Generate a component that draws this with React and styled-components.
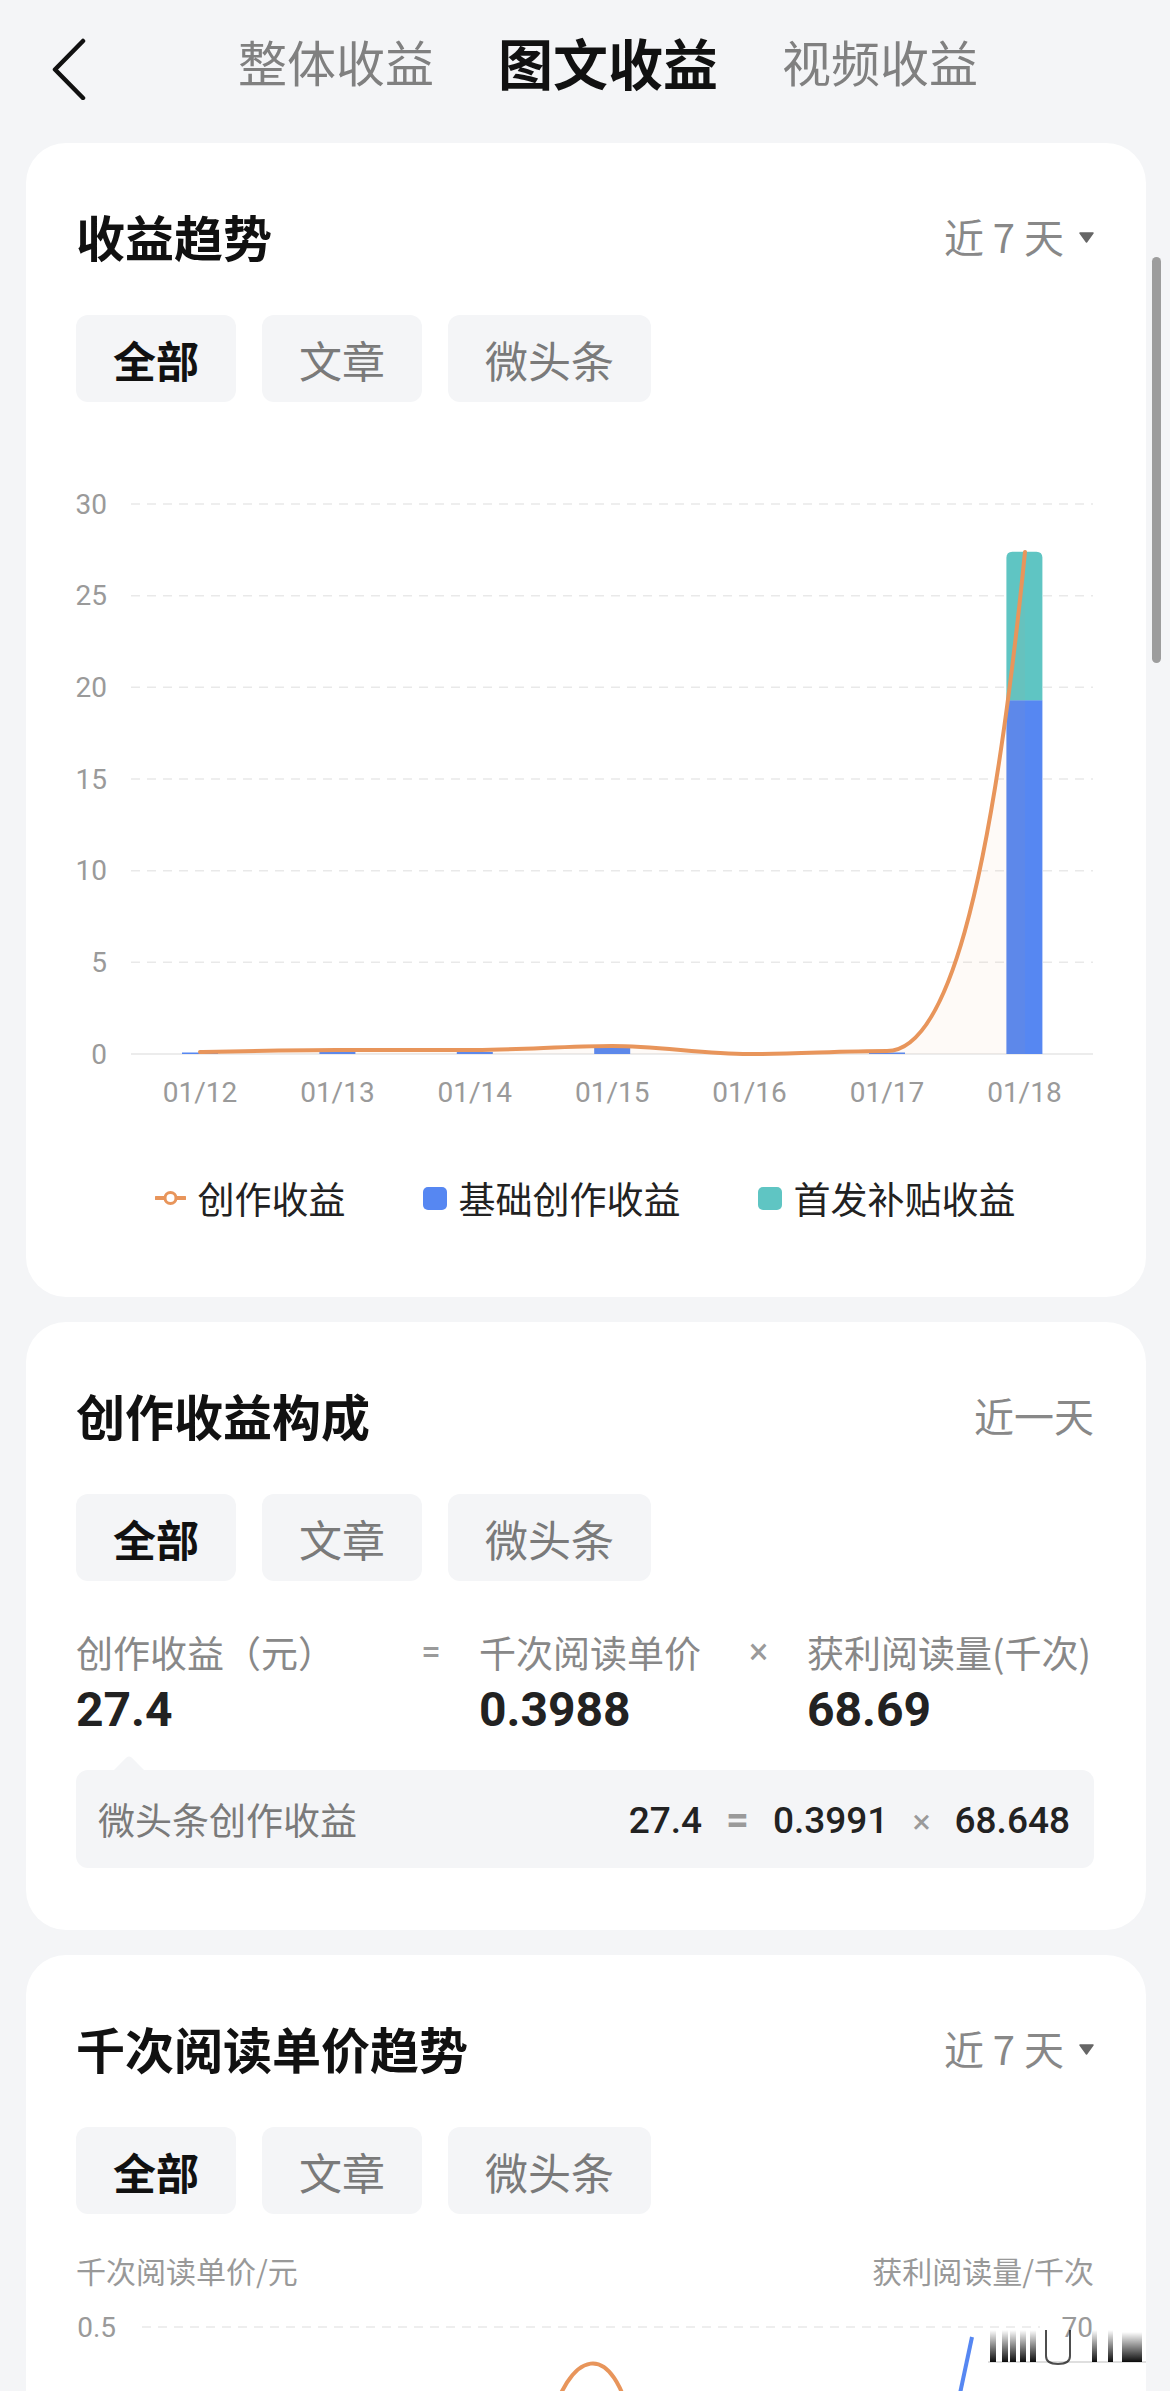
import React from 'react';
import styled, { createGlobalStyle } from 'styled-components';

const GlobalStyle = createGlobalStyle`
  html, body {
    margin: 0;
    padding: 0;
    background: #f4f5f7;
  }
  body {
    font-family: "Noto Sans CJK SC", "Noto Sans", sans-serif;
    color: #111;
  }
`;

const ORANGE = '#e8955b';
const BLUE = '#5687f2';
const TEAL = '#5fc5c3';

const Page = styled.div`
  position: relative;
  width: 1170px;
  min-height: 2391px;
  box-sizing: border-box;
  padding: 0 24px 40px 26px;
  overflow: hidden;
`;

const Header = styled.div`
  height: 122px;
  display: flex;
  align-items: center;
  padding-left: 22px;
`;

const Back = styled.svg`
  width: 40px;
  height: 70px;
  margin-top: 8px;
  flex-shrink: 0;
`;

const Tabs = styled.div`
  display: flex;
  align-items: center;
  gap: 64px;
  margin-left: 150px;
`;

const Tab = styled.span`
  font-size: ${p => (p.$active ? '55px' : '49px')};
  font-weight: ${p => (p.$active ? 700 : 400)};
  color: ${p => (p.$active ? '#111' : '#808080')};
  line-height: 70px;
`;

const Stack = styled.div`
  display: flex;
  flex-direction: column;
  gap: 25px;
  margin-top: 21px;
`;

const Card = styled.section`
  background: #fff;
  border-radius: 40px;
  padding: 63px 52px ${p => p.$pb || 60}px 50px;
`;

const CardHead = styled.div`
  display: flex;
  align-items: center;
  justify-content: space-between;
  height: 60px;
`;

const Title = styled.h2`
  margin: 0;
  font-size: 49px;
  font-weight: 700;
  line-height: 60px;
  color: #111;
`;

const Range = styled.div`
  display: flex;
  align-items: center;
  font-size: 40px;
  color: #888;
  white-space: pre;
`;

const Caret = styled.svg`
  width: 15px;
  height: 11px;
  margin-left: 15px;
  margin-top: 2px;
`;

const Chips = styled.div`
  display: flex;
  gap: 26px;
  margin-top: 49px;
`;

const Chip = styled.div`
  height: 87px;
  padding: 0 37px;
  display: flex;
  align-items: center;
  border-radius: 12px;
  background: #f4f5f7;
  font-size: 43px;
  font-weight: ${p => (p.$active ? 700 : 400)};
  color: ${p => (p.$active ? '#111' : '#7a7a7a')};
`;

const Chart = styled.svg`
  display: block;
  width: 1030px;
  height: ${p => p.$h}px;
  margin-left: -12px;
  font-family: Roboto, "Liberation Sans", sans-serif;
`;

const Legend = styled.div`
  display: flex;
  justify-content: center;
  gap: 77px;
  margin-top: 53px;
  font-size: 37px;
  line-height: 50px;
  color: #222;
`;

const LegendItem = styled.div`
  display: flex;
  align-items: center;
  gap: 12px;
`;

const Swatch = styled.span`
  width: 24px;
  height: 23px;
  border-radius: 5px;
  background: ${p => p.$color};
`;

const Formula = styled.div`
  display: grid;
  grid-template-columns: 345px 58px 270px 58px 1fr;
  margin-top: 47px;
`;

const TermLabel = styled.div`
  font-size: 37px;
  line-height: 48px;
  color: #888;
  white-space: nowrap;
`;

const TermValue = styled.div`
  margin-top: 6px;
  font-family: Roboto, "Liberation Sans", sans-serif;
  font-size: 48px;
  font-weight: 700;
  line-height: 56px;
  color: #222;
`;

const Op = styled.div`
  font-family: Roboto, "Liberation Sans", sans-serif;
  font-size: 36px;
  line-height: 48px;
  color: #9a9a9a;
`;

const SubBox = styled.div`
  position: relative;
  margin-top: 32px;
  height: 98px;
  padding: 0 24px 0 22px;
  display: flex;
  align-items: center;
  justify-content: space-between;
  background: #f4f5f7;
  border-radius: 12px;
  &::before {
    content: '';
    position: absolute;
    top: -10px;
    left: 41px;
    width: 24px;
    height: 24px;
    background: #f4f5f7;
    border-top-left-radius: 4px;
    transform: rotate(45deg);
  }
`;

const SubLabel = styled.span`
  font-size: 37px;
  color: #7a7a7a;
`;

const SubNums = styled.div`
  display: flex;
  align-items: baseline;
  gap: 24px;
  font-family: Roboto, "Liberation Sans", sans-serif;
  font-size: 37px;
  font-weight: 500;
  color: #222;
`;

const SubOp = styled.span`
  color: #9a9a9a;
  font-weight: ${p => (p.$bold ? 700 : 400)};
  font-size: ${p => (p.$bold ? '40px' : '34px')};
`;

const AxisRow = styled.div`
  display: flex;
  justify-content: space-between;
  margin-top: 36px;
  font-size: 30px;
  line-height: 40px;
  color: #999;
`;

const Scrollbar = styled.div`
  position: absolute;
  left: 1152px;
  top: 257px;
  width: 9px;
  height: 406px;
  border-radius: 5px;
  background: #9d9d9d;
`;

const Watermark = styled.svg`
  position: absolute;
  left: 988px;
  top: 2320px;
  width: 158px;
  height: 46px;
`;

const FILTERS = ['全部', '文章', '微头条'];
const DATES = ['01/12', '01/13', '01/14', '01/15', '01/16', '01/17', '01/18'];
const TICKS = [0, 5, 10, 15, 20, 25, 30];
const SMALL_BARS = [1.5, 2, 2, 6, 0, 1.5];
const ZERO = 652;
const UNIT = 550 / 30;
const colX = i => 122 + i * 137.4;

const LINE =
  'M122,650 C168,649 213,648 259,648 C305,648 351,648 397,648 C443,648 488,644 534,644 ' +
  'C580,644 625,652 671,652 C717,652 763,649 809,649 C867,649 912,498 947,150';

function FilterChips() {
  return (
    <Chips>
      {FILTERS.map((f, i) => (
        <Chip key={f} $active={i === 0}>{f}</Chip>
      ))}
    </Chips>
  );
}

function RangePicker({ label, dropdown }) {
  return (
    <Range>
      {label}
      {dropdown && (
        <Caret viewBox="0 0 15 11">
          <path d="M1,1 L14,1 L7.5,10 Z" fill="#666" strokeLinejoin="round" stroke="#666" strokeWidth="1.5" />
        </Caret>
      )}
    </Range>
  );
}

function TrendChart() {
  const top = ZERO - 27.4 * UNIT;
  const mid = ZERO - 19.3 * UNIT;
  const bx = colX(6) - 18;
  return (
    <Chart $h={718} viewBox="-14 0 1030 718">
      {TICKS.map(t => {
        const y = ZERO - t * UNIT;
        return (
          <g key={t}>
            <line
              x1="53" x2="1015" y1={y} y2={y}
              stroke={t === 0 ? '#ececec' : '#e9e9e9'}
              strokeWidth={t === 0 ? 2 : 1.5}
              strokeDasharray={t === 0 ? undefined : '9 7'}
            />
            <text x="29" y={y} textAnchor="end" dominantBaseline="central" fontSize="28" fill="#9a9a9a">{t}</text>
          </g>
        );
      })}
      {SMALL_BARS.map((h, i) =>
        h > 0 ? <rect key={i} x={colX(i) - 18} y={ZERO - h} width="36" height={h} fill={BLUE} /> : null
      )}
      <rect x={bx} y={mid} width="36" height={ZERO - mid} fill={BLUE} />
      <path
        d={`M${bx},${mid} L${bx},${top + 6} Q${bx},${top} ${bx + 6},${top} L${bx + 30},${top} Q${bx + 36},${top} ${bx + 36},${top + 6} L${bx + 36},${mid} Z`}
        fill={TEAL}
      />
      <path d={`${LINE} L947,${ZERO} L122,${ZERO} Z`} fill="rgba(232,149,91,0.05)" />
      <path d={LINE} fill="none" stroke={ORANGE} strokeWidth="4" strokeLinecap="round" />
      {DATES.map((d, i) => (
        <text key={d} x={colX(i)} y="690" textAnchor="middle" dominantBaseline="central" fontSize="28" fill="#9a9a9a">{d}</text>
      ))}
    </Chart>
  );
}

function PriceChart() {
  return (
    <Chart $h={160} viewBox="-14 0 1030 160">
      <line x1="64" x2="962" y1="37" y2="37" stroke="#e9e9e9" strokeWidth="1.5" strokeDasharray="9 7" />
      <text x="38" y="37" textAnchor="end" dominantBaseline="central" fontSize="28" fill="#9a9a9a">0.5</text>
      <text x="1015" y="37" textAnchor="end" dominantBaseline="central" fontSize="28" fill="#9a9a9a">70</text>
      <path d="M440,160 C455,120 462,140 470,140 C490,60 535,43 555,140 C562,150 570,160 580,160" fill="none" stroke={ORANGE} strokeWidth="4" />
      <path d="M894,47 L870,160" stroke={BLUE} strokeWidth="4" fill="none" />
    </Chart>
  );
}

export default function App() {
  return (
    <>
      <GlobalStyle />
      <Page>
        <Header>
          <Back viewBox="0 0 40 70">
            <path d="M35,11 L7,39.5 L35,68" fill="none" stroke="#111" strokeWidth="4.5" strokeLinecap="round" strokeLinejoin="round" />
          </Back>
          <Tabs>
            <Tab>整体收益</Tab>
            <Tab $active>图文收益</Tab>
            <Tab>视频收益</Tab>
          </Tabs>
        </Header>

        <Stack>
          <Card $pb={74}>
            <CardHead>
              <Title>收益趋势</Title>
              <RangePicker label="近 7 天" dropdown />
            </CardHead>
            <FilterChips />
            <TrendChart />
            <Legend>
              <LegendItem>
                <svg width="31" height="16" viewBox="0 0 31 16">
                  <line x1="1" x2="30" y1="8" y2="8" stroke={ORANGE} strokeWidth="4" strokeLinecap="round" />
                  <circle cx="15.5" cy="8" r="5.5" fill="#fff" stroke={ORANGE} strokeWidth="3" />
                </svg>
                创作收益
              </LegendItem>
              <LegendItem>
                <Swatch $color={BLUE} />
                基础创作收益
              </LegendItem>
              <LegendItem>
                <Swatch $color={TEAL} />
                首发补贴收益
              </LegendItem>
            </Legend>
          </Card>

          <Card $pb={62}>
            <CardHead>
              <Title>创作收益构成</Title>
              <RangePicker label="近一天" />
            </CardHead>
            <FilterChips />
            <Formula>
              <div>
                <TermLabel>创作收益（元）</TermLabel>
                <TermValue>27.4</TermValue>
              </div>
              <Op>=</Op>
              <div>
                <TermLabel>千次阅读单价</TermLabel>
                <TermValue>0.3988</TermValue>
              </div>
              <Op>×</Op>
              <div>
                <TermLabel>获利阅读量(千次)</TermLabel>
                <TermValue>68.69</TermValue>
              </div>
            </Formula>
            <SubBox>
              <SubLabel>微头条创作收益</SubLabel>
              <SubNums>
                <span>27.4</span>
                <SubOp $bold>=</SubOp>
                <span>0.3991</span>
                <SubOp>×</SubOp>
                <span>68.648</span>
              </SubNums>
            </SubBox>
          </Card>

          <Card $pb={60}>
            <CardHead>
              <Title>千次阅读单价趋势</Title>
              <RangePicker label="近 7 天" dropdown />
            </CardHead>
            <FilterChips />
            <AxisRow>
              <span>千次阅读单价/元</span>
              <span>获利阅读量/千次</span>
            </AxisRow>
            <PriceChart />
          </Card>
        </Stack>

        <Scrollbar />
        <Watermark viewBox="0 0 158 46">
          <defs>
            <linearGradient id="wm" x1="0" y1="0" x2="0" y2="1">
              <stop offset="0" stopColor="#000" stopOpacity="0" />
              <stop offset="1" stopColor="#000" stopOpacity="0.95" />
            </linearGradient>
          </defs>
          {[2, 14, 22, 32, 42].map(x => (
            <rect key={x} x={x} y="10" width="6" height="32" fill="url(#wm)" />
          ))}
          <path d="M58,10 L58,36 Q58,44 70,44 Q82,44 82,36 L82,10" fill="none" stroke="#222" strokeWidth="2" opacity="0.8" />
          {[104, 120].map(x => (
            <rect key={x} x={x} y="10" width="5" height="32" fill="url(#wm)" />
          ))}
          <rect x="134" y="12" width="20" height="30" fill="url(#wm)" />
          <line x1="0" x2="158" y1="42" y2="42" stroke="#000" strokeOpacity="0.25" strokeWidth="1" />
        </Watermark>
      </Page>
    </>
  );
}
